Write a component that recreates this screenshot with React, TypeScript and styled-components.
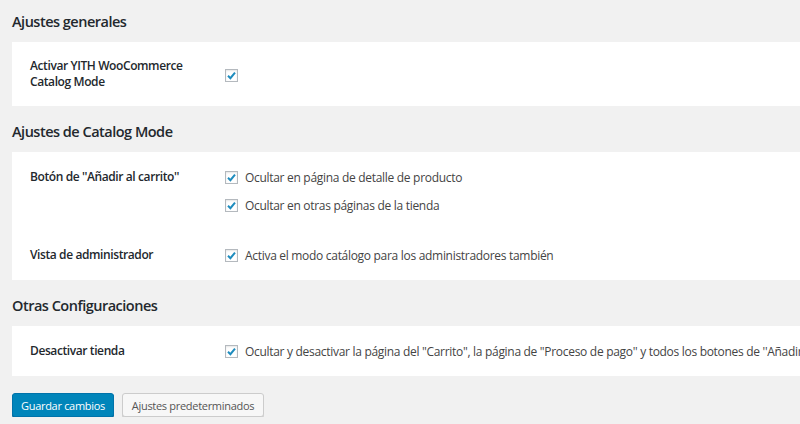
import styled, { createGlobalStyle } from 'styled-components';

const GlobalStyle = createGlobalStyle`
  html, body {
    margin: 0;
    padding: 0;
    background: #f1f1f1;
    overflow: hidden;
  }
  body {
    font-family: 'Open Sans', 'Noto Sans', 'Liberation Sans', sans-serif;
    color: #23282d;
  }
`;

type Option = { text: string };
type Row = { label: string[]; options: Option[]; pad?: number };
type Section = { title: string; rows: Row[] };

const sections: Section[] = [
  {
    title: 'Ajustes generales',
    rows: [
      {
        label: ['Activar YITH WooCommerce', 'Catalog Mode'],
        options: [{ text: '' }],
        pad: 16,
      },
    ],
  },
  {
    title: 'Ajustes de Catalog Mode',
    rows: [
      {
        label: ["Botón de ''Añadir al carrito''"],
        options: [
          { text: 'Ocultar en página de detalle de producto' },
          { text: 'Ocultar en otras páginas de la tienda' },
        ],
      },
      {
        label: ['Vista de administrador'],
        options: [{ text: 'Activa el modo catálogo para los administradores también' }],
      },
    ],
  },
  {
    title: 'Otras Configuraciones',
    rows: [
      {
        label: ['Desactivar tienda'],
        options: [
          {
            text: "Ocultar y desactivar la página del \"Carrito\", la página de \"Proceso de pago'' y todos los botones de ''Añadir al carrito''",
          },
        ],
      },
    ],
  },
];

const Checkbox = () => (
  <Box>
    <svg width="11" height="11" viewBox="0 0 11 11">
      <path d="M2 5.8 L4.4 8.2 L9 2.6" fill="none" stroke="#1e8cbe" strokeWidth="2" />
    </svg>
  </Box>
);

const App = () => {
  return (
    <Page>
      <GlobalStyle />
      {sections.map((s) => (
        <div key={s.title}>
          <Heading>{s.title}</Heading>
          <Panel>
            {s.rows.map((r, i) => (
              <FormRow key={i} $pad={r.pad ?? 15}>
                <Label $multi={r.label.length > 1}>
                  {r.label.map((l) => (
                    <div key={l}>{l}</div>
                  ))}
                </Label>
                <Options $multi={r.label.length > 1}>
                  {r.options.map((o, j) => (
                    <OptionLine key={j}>
                      <Checkbox />
                      {o.text && <span>{o.text}</span>}
                    </OptionLine>
                  ))}
                </Options>
              </FormRow>
            ))}
          </Panel>
        </div>
      ))}
      <Actions>
        <PrimaryButton>Guardar cambios</PrimaryButton>
        <SecondaryButton>Ajustes predeterminados</SecondaryButton>
      </Actions>
    </Page>
  );
};

const Page = styled.div`
  padding: 12px 0 0 12px;
  width: 1200px;
`;

const Heading = styled.h2`
  margin: 16px 0 10px;
  font-size: 14.5px;
  letter-spacing: -0.5px;
  line-height: 20px;
  font-weight: 600;
  color: #23282d;
  div:first-child > & {
    margin-top: 0;
  }
`;

const Panel = styled.div`
  background: #fff;
  padding-left: 18px;
`;

const FormRow = styled.div<{ $pad: number }>`
  display: grid;
  grid-template-columns: 195px 1fr;
  padding: ${({ $pad }) => $pad}px 0;
`;

const Label = styled.div<{ $multi: boolean }>`
  font-size: 12px;
  letter-spacing: -0.4px;
  font-weight: 600;
  line-height: ${({ $multi }) => ($multi ? '16px' : '20px')};
  color: #23282d;
`;

const Options = styled.div<{ $multi: boolean }>`
  display: flex;
  flex-direction: column;
  gap: 8px;
  padding-top: ${({ $multi }) => ($multi ? '7px' : '0')};
`;

const OptionLine = styled.div`
  display: flex;
  align-items: center;
  gap: 7px;
  height: 20px;
  font-size: 12px;
  letter-spacing: -0.3px;
  color: #444;
  white-space: nowrap;
`;

const Box = styled.span`
  width: 13px;
  height: 13px;
  box-sizing: border-box;
  border: 1px solid #b4b9be;
  background: #fff;
  box-shadow: inset 0 1px 2px rgba(0, 0, 0, 0.1);
  display: inline-flex;
  align-items: center;
  justify-content: center;
  flex: none;
`;

const Actions = styled.div`
  display: flex;
  gap: 8px;
  margin-top: 17px;
`;

const BaseButton = styled.button`
  height: 24px;
  padding: 0;
  font-family: inherit;
  font-size: 11px;
  letter-spacing: -0.3px;
  white-space: nowrap;
  border-radius: 3px;
  cursor: pointer;
`;

const PrimaryButton = styled(BaseButton)`
  width: 102px;
  background: #0085ba;
  border: 1px solid #0073aa;
  color: #fff;
  box-shadow: 0 1px 0 #006799;
`;

const SecondaryButton = styled(BaseButton)`
  width: 142px;
  background: #f7f7f7;
  border: 1px solid #ccc;
  color: #555;
  box-shadow: 0 1px 0 #ccc;
`;

export default App;
